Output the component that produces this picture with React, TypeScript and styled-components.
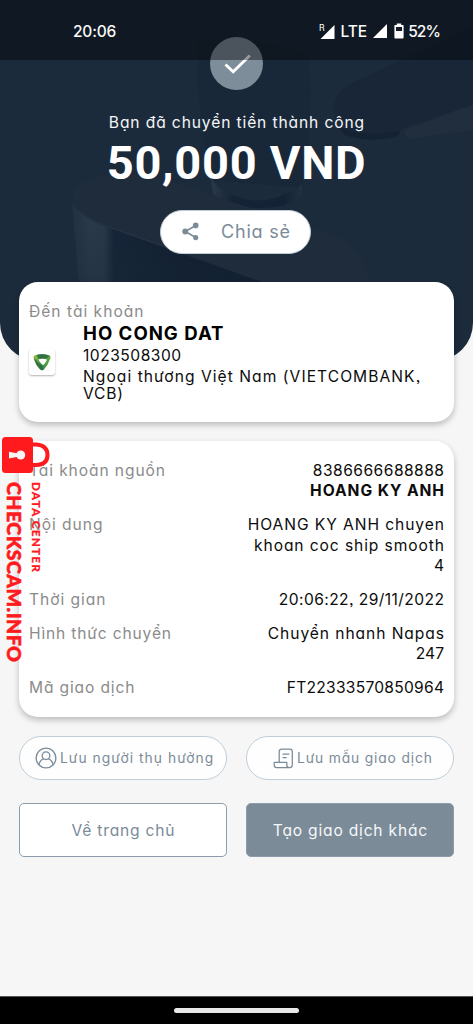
import React from "react";
import styled, { createGlobalStyle } from "styled-components";

const slate = "#7b8b98";

const GlobalStyle = createGlobalStyle`
  * { box-sizing: border-box; }
  body {
    margin: 0;
    background: #f6f6f6;
    font-family: Inter, "Noto Sans", sans-serif;
    font-feature-settings: "cv11" 1, "ss03" 1;
    color: #0c0c0c;
  }
`;

const Screen = styled.div`
  width: 473px;
  height: 1024px;
  display: flex;
  flex-direction: column;
  position: relative;
  overflow: hidden;
  background: #f6f6f6;
`;

const Header = styled.header`
  position: relative;
  flex: none;
  height: 361px;
  border-radius: 0 0 38px 38px;
  overflow: hidden;
  background: #1c2b3b;
  display: flex;
  flex-direction: column;
  align-items: center;
  color: #f4f6f8;
`;

const Backdrop = styled.svg`
  position: absolute;
  inset: 0;
`;

const StatusBar = styled.div`
  position: absolute;
  inset: 0 0 auto 0;
  height: 59.5px;
  padding: 3px 33px 0 73px;
  display: flex;
  align-items: center;
  justify-content: space-between;
  background: rgba(0, 0, 0, 0.4);
`;

const Status = styled.span<{ $track?: number }>`
  font-family: Inter, sans-serif;
  font-size: 15.5px;
  font-weight: 500;
  letter-spacing: ${(p) => p.$track ?? 0}px;
  color: #fafafa;
  white-space: nowrap;
`;

const StatusRight = styled.div`
  display: flex;
  align-items: center;
`;

const NetworkType = styled(Status)`
  margin: 0 6px 0 5px;
`;

const BatteryLevel = styled.div`
  display: flex;
  align-items: center;
  gap: 4px;
  margin-left: 7px;
`;

const CheckBadge = styled.div`
  position: relative;
  margin-top: 37px;
  width: 53px;
  height: 53px;
  flex: none;
  border-radius: 50%;
  background: #7d8d99;
`;

const Line = styled.span<{ $track?: number; $size?: number; $weight?: number }>`
  display: block;
  font-size: ${(p) => p.$size ?? 15.6}px;
  font-weight: ${(p) => p.$weight ?? 400};
  letter-spacing: ${(p) => p.$track ?? 0}px;
  margin-right: ${(p) => -(p.$track ?? 0)}px;
  white-space: nowrap;
`;

const SuccessText = styled(Line)`
  position: relative;
  margin-top: 23px;
  line-height: 20px;
`;

const Amount = styled.div`
  position: relative;
  margin-top: 1.5px;
  font: 700 47px/56px Roboto, sans-serif;
  letter-spacing: 0.7px;
  white-space: nowrap;
  color: #fff;
`;

const ShareButton = styled.button`
  position: relative;
  left: -1px;
  margin-top: 19px;
  width: 151px;
  height: 44px;
  border: 1.5px solid #c3ccd6;
  border-radius: 22px;
  background: #fff;
  color: ${slate};
  font-family: inherit;
  font-feature-settings: inherit;
  display: flex;
  align-items: center;
  padding: 0 0 0 21px;
  gap: 22px;
`;

const Main = styled.main`
  position: relative;
  margin-top: -79px;
  padding: 0 19px;
  display: flex;
  flex-direction: column;
`;

const Card = styled.section`
  background: #fff;
  border-radius: 19px;
  box-shadow: 0 3px 6px rgba(0, 0, 0, 0.24);
  padding: 20px 10px 0;
`;

const RecipientCard = styled(Card)`
  height: 140px;
`;

const DetailCard = styled(Card)`
  margin-top: 19px;
  height: 275.5px;
  display: flex;
  flex-direction: column;
  gap: 13.9px;
`;

const Label = styled(Line)`
  color: #8b8b8b;
  line-height: 20.2px;
`;

const Recipient = styled.div`
  display: flex;
  gap: 28px;
`;

const LogoTile = styled.div`
  margin-top: 27px;
  width: 26px;
  height: 26px;
  flex: none;
  border-radius: 3px;
  background: #fff;
  box-shadow: 0 1px 2px rgba(0, 0, 0, 0.3);
  display: flex;
  align-items: center;
  justify-content: center;
`;

const RecipientText = styled.div`
  display: flex;
  flex-direction: column;
`;

const Name = styled(Line)`
  line-height: 22px;
  color: #000;
`;

const Account = styled(Line)`
  line-height: 23px;
`;

const Bank = styled(Line)`
  line-height: 16.5px;
`;

const BankLines = styled.div`
  margin-top: 2px;
`;

const Row = styled.div`
  display: flex;
  justify-content: space-between;
  align-items: flex-start;
`;

const Value = styled.div`
  display: flex;
  flex-direction: column;
  align-items: flex-end;
  line-height: 20.2px;
`;

const Actions = styled.div<{ $top: number }>`
  display: grid;
  grid-template-columns: 208px 208px;
  justify-content: space-between;
  margin-top: ${(p) => p.$top}px;
`;

const Pill = styled.button<{ $inset: number; $gap: number }>`
  height: 44px;
  border: 1px solid #c0ced9;
  border-radius: 22px;
  background: #fefefe;
  color: ${slate};
  font-family: inherit;
  font-feature-settings: inherit;
  display: flex;
  align-items: center;
  padding: 0 0 0 ${(p) => p.$inset}px;
  gap: ${(p) => p.$gap}px;
`;

const Action = styled.button<{ $filled?: boolean }>`
  height: 54px;
  border: 1.3px solid #8c9cab;
  border-radius: 5px;
  background: ${(p) => (p.$filled ? slate : "#fff")};
  color: ${(p) => (p.$filled ? "#f6f8fa" : slate)};
  font-family: inherit;
  font-feature-settings: inherit;
  display: flex;
  align-items: center;
  justify-content: center;
  padding: 0;
`;

const NavBar = styled.footer`
  margin-top: auto;
  height: 28px;
  background: #000;
  border-top: 1px solid #555;
  display: flex;
  align-items: center;
  justify-content: center;
`;

const HomeIndicator = styled.div`
  width: 125px;
  height: 5px;
  border-radius: 3px;
  background: #e8e8e8;
`;

const Watermark = styled.div`
  position: absolute;
  left: 2px;
  top: 437px;
  width: 50px;
  color: #ff1a1d;
  display: flex;
  flex-direction: column;
  font-family: Lato, sans-serif;
`;

const WatermarkWords = styled.div`
  display: flex;
  gap: 5px;
  margin-top: 8px;
  padding-left: 2px;
  align-items: flex-start;
`;

const Vertical = styled.span<{ $size: number; $track: number; $width: number; $stroke: number }>`
  writing-mode: vertical-rl;
  width: ${(p) => p.$width}px;
  line-height: ${(p) => p.$width}px;
  font-size: ${(p) => p.$size}px;
  font-weight: 900;
  letter-spacing: ${(p) => p.$track}px;
  -webkit-text-stroke: ${(p) => p.$stroke}px #ff1a1d;
  white-space: nowrap;
`;

const HeaderArt = () => (
  <Backdrop width="473" height="361" viewBox="0 0 473 361">
    <defs>
      <linearGradient id="side" x1="0" x2="1">
        <stop offset="0" stopColor="#223142" />
        <stop offset="0.1" stopColor="#2c3b4c" />
        <stop offset="0.17" stopColor="#2a3949" />
        <stop offset="0.22" stopColor="#152436" />
        <stop offset="0.6" stopColor="#0f1d2f" />
        <stop offset="1" stopColor="#0e1c2e" />
      </linearGradient>
      <linearGradient id="rim" x1="0" x2="1">
        <stop offset="0" stopColor="#2b394a" />
        <stop offset="0.25" stopColor="#142335" />
        <stop offset="0.8" stopColor="#132234" />
        <stop offset="1" stopColor="#223142" />
      </linearGradient>
      <linearGradient id="fade" x1="0" x2="0" y1="0" y2="1">
        <stop offset="0" stopColor="#1b2a3a" stopOpacity="0" />
        <stop offset="1" stopColor="#1b2a3a" stopOpacity="0.75" />
      </linearGradient>
    </defs>
    <path d="M197 40Q255 36 309 55Q314 120 302 188L212 180Q197 120 197 40Z" fill="#192838" />
    <path d="M211 178L213 194Q235 209 261 208Q295 207 302 194V184Q270 208 238 197Q218 190 211 178Z" fill="url(#rim)" />
    <path d="M473 26L350 84Q332 95 334 112Q339 135 375 134Q388 134 404 128L473 104Z" fill="#182637" />
    <path d="M338 126Q366 140 401 130L398 136Q370 144 345 135Z" fill="#142232" />
    <path d="M404 130L473 105V130L408 139Z" fill="#202e3e" />
    <path d="M72 200Q73 181 101 176Q145 168 211 195L340 238Q363 248 369 282H262L112 229Q82 218 72 200Z" fill="#1e2c3c" />
    <path d="M72 204Q83 219 112 229L262 282H79Z" fill="url(#side)" />
    <path d="M72 204Q83 219 112 229L262 282H79Z" fill="url(#fade)" opacity="0.5" />
    <path d="M72 203Q83 218 112 228L180 252" fill="none" stroke="#29384a" strokeWidth="0.7" />
  </Backdrop>
);

const Signal = () => (
  <svg width="14" height="14" viewBox="0 0 14 14">
    <path d="M14 0V14H0Z" fill="#fff" />
  </svg>
);

const RoamingSignal = () => (
  <svg width="16" height="17" viewBox="0 0 16 17">
    <path d="M15.5 2V16H1.5Z" fill="#fff" />
    <text x="0" y="7.5" fontSize="8.6" fontFamily="Roboto" fill="#fff">R</text>
  </svg>
);

const Battery = () => (
  <svg width="10" height="16" viewBox="0 0 10 16">
    <path d="M2.8 0.5H7.2V2H9Q9.6 2 9.6 2.7V14.5Q9.6 15.4 8.8 15.4H1.2Q0.4 15.4 0.4 14.5V2.7Q0.4 2 1 2H2.8Z" fill="#fff" />
    <path d="M2 4H8V8H2Z" fill="#141b24" />
  </svg>
);

const ShareIcon = () => (
  <svg width="17" height="19" viewBox="0 0 17 19" fill={slate}>
    <path d="M13.7 3.5L3.3 9.5L13.7 15.5" fill="none" stroke={slate} strokeWidth="1.6" />
    <circle cx="13.7" cy="3.4" r="2.8" />
    <circle cx="3.2" cy="9.5" r="2.9" />
    <circle cx="13.7" cy="15.6" r="2.6" />
  </svg>
);

const BankMark = () => (
  <svg width="18" height="18" viewBox="0 0 18 18">
    <defs>
      <linearGradient id="leaf" x1="0" x2="1">
        <stop offset="0" stopColor="#9ac347" />
        <stop offset="0.5" stopColor="#3c8c45" />
        <stop offset="1" stopColor="#6bab3f" />
      </linearGradient>
    </defs>
    <path d="M1.5 2.6Q9 -0.2 16.5 2.6Q18 3.3 17.3 5.4Q15.2 12 11 16.3Q9 18 7 16.3Q2.7 12 0.7 5.4Q0 3.3 1.5 2.6Z" fill="url(#leaf)" />
    <path d="M0.7 5.4Q3 6 5.2 9.5L9.2 12.5L11 16.3Q9 18 7 16.3Q2.7 12 0.7 5.4Z" fill="#2a6b45" opacity="0.85" />
    <path d="M3.6 1.9Q10 0 16.5 2.6L13.5 5.6Q8 4.8 5.5 5.5Z" fill="#246040" opacity="0.65" />
    <path d="M6 6.2Q9.5 5.3 13.4 6.2Q14 6.5 13.7 7.2Q12.5 9.8 10.6 11.7Q9.8 12.2 9.2 11.5Q7 9.5 5.6 7.1Q5.3 6.4 6 6.2Z" fill="#fff" />
  </svg>
);

const UserIcon = () => (
  <svg width="22" height="22" viewBox="0 0 22 22" fill="none" stroke={slate} strokeWidth="1.3">
    <circle cx="11" cy="11" r="9.9" />
    <circle cx="11" cy="8.7" r="3.8" />
    <path d="M3.9 17.7Q5 12.8 8.6 11.8M18.1 17.7Q17 12.8 13.4 11.8" strokeLinecap="round" />
  </svg>
);

const ScrollIcon = () => (
  <svg width="21" height="21" viewBox="0 0 21 21" fill="none" stroke={slate} strokeWidth="1.25" strokeLinejoin="round" strokeLinecap="round">
    <path d="M6.2 14.2V3.6Q6.2 1.1 8.8 1.1H16.7Q19.3 1.1 19.3 3.6V17Q19.3 19.6 16.7 19.6H3.7Q1.2 19.6 1.2 17V14.4H13.8V17Q13.8 19.6 16.5 19.6" />
    <path d="M10 6.2H15.8M10 9.6H13.2" />
  </svg>
);

const Padlock = () => (
  <svg width="49" height="37" viewBox="0 0 49 37">
    <path d="M29 7.5H34.5Q45.5 8.5 45.5 18T34.5 28H29" fill="none" stroke="#ff1a1d" strokeWidth="4" />
    <rect x="0" y="0" width="31" height="36" rx="3.5" fill="#ff1a1d" />
    <circle cx="18.7" cy="18" r="4.5" fill="#f6f6f6" />
    <path d="M7 14.7L17 16.7V19.5L7 21.5Z" fill="#f6f6f6" />
  </svg>
);

type Text = { text: string; track: number; weight?: number };

const details: { label: Text; values: Text[] }[] = [
  {
    label: { text: "Tài khoản nguồn", track: 0.9 },
    values: [
      { text: "8386666688888", track: 0.47 },
      { text: "HOANG KY ANH", track: 0.95, weight: 700 },
    ],
  },
  {
    label: { text: "Nội dung", track: 0.95 },
    values: [
      { text: "HOANG KY ANH chuyen", track: 0.93 },
      { text: "khoan coc ship smooth", track: 0.9 },
      { text: "4", track: 0 },
    ],
  },
  { label: { text: "Thời gian", track: 0.95 }, values: [{ text: "20:06:22, 29/11/2022", track: 0.42 }] },
  {
    label: { text: "Hình thức chuyển", track: 0.83 },
    values: [
      { text: "Chuyển nhanh Napas", track: 0.93 },
      { text: "247", track: 0 },
    ],
  },
  { label: { text: "Mã giao dịch", track: 0.85 }, values: [{ text: "FT22333570850964", track: 0.25 }] },
];

export default function App() {
  return (
    <Screen>
      <GlobalStyle />
      <Header>
        <HeaderArt />
        <CheckBadge>
          <svg width="53" height="53" viewBox="0 0 53 53">
            <path d="M15.5 27.5L23.2 34.8L39.8 18.5" fill="none" stroke="#fff" strokeWidth="2.9" />
          </svg>
        </CheckBadge>
        <SuccessText $track={0.88}>Bạn đã chuyển tiền thành công</SuccessText>
        <Amount>50,000 VND</Amount>
        <ShareButton>
          <ShareIcon />
          <Line $size={18} $track={0.8}>Chia sẻ</Line>
        </ShareButton>
        <StatusBar>
          <Status $track={-0.2}>20:06</Status>
          <StatusRight>
            <RoamingSignal />
            <NetworkType>LTE</NetworkType>
            <Signal />
            <BatteryLevel>
              <Battery />
              <Status $track={-0.9}>52%</Status>
            </BatteryLevel>
          </StatusRight>
        </StatusBar>
      </Header>

      <Main>
        <RecipientCard>
          <Label $track={1}>Đến tài khoản</Label>
          <Recipient>
            <LogoTile>
              <BankMark />
            </LogoTile>
            <RecipientText>
              <Name $size={18.6} $weight={700} $track={1}>HO CONG DAT</Name>
              <Account $track={0.5}>1023508300</Account>
              <BankLines>
                <Bank $track={1.05}>Ngoại thương Việt Nam (VIETCOMBANK,</Bank>
                <Bank $track={0.8}>VCB)</Bank>
              </BankLines>
            </RecipientText>
          </Recipient>
        </RecipientCard>

        <DetailCard>
          {details.map(({ label, values }) => (
            <Row key={label.text}>
              <Label $track={label.track}>{label.text}</Label>
              <Value>
                {values.map((v) => (
                  <Line key={v.text} $track={v.track} $weight={v.weight}>{v.text}</Line>
                ))}
              </Value>
            </Row>
          ))}
        </DetailCard>

        <Actions $top={19.5}>
          <Pill $inset={15} $gap={3}>
            <UserIcon />
            <Line $size={13.8} $track={1.05}>Lưu người thụ hưởng</Line>
          </Pill>
          <Pill $inset={26} $gap={3}>
            <ScrollIcon />
            <Line $size={13.8} $track={0.85}>Lưu mẫu giao dịch</Line>
          </Pill>
        </Actions>
        <Actions $top={23}>
          <Action>
            <Line $track={0.8}>Về trang chủ</Line>
          </Action>
          <Action $filled>
            <Line $track={0.8}>Tạo giao dịch khác</Line>
          </Action>
        </Actions>
      </Main>

      <NavBar>
        <HomeIndicator />
      </NavBar>

      <Watermark>
        <Padlock />
        <WatermarkWords>
          <Vertical $size={19.5} $track={0.5} $width={20} $stroke={0.6}>CHECKSCAM.INFO</Vertical>
          <Vertical $size={11.8} $track={1.15} $width={14} $stroke={0.2}>DATA CENTER</Vertical>
        </WatermarkWords>
      </Watermark>
    </Screen>
  );
}
